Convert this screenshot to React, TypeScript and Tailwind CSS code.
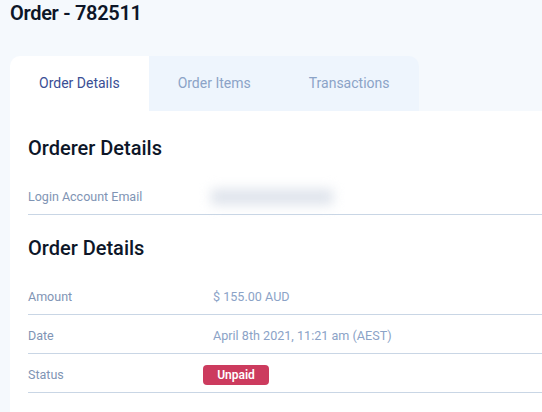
import React from 'react';

const rows = [
  { label: 'Amount', value: '$ 155.00 AUD' },
  { label: 'Date', value: 'April 8th 2021, 11:21 am (AEST)' },
];

export default function App() {
  return (
    <div
      className="w-[542px] h-[412px] overflow-hidden bg-[#f5f9fd] text-[#0d1628]"
      style={{ fontFamily: 'Roboto, "Noto Sans", sans-serif' }}
    >
      {/* Page title */}
      <h1 className="pl-[10px] text-[20px] font-semibold leading-[24px] pt-[1px] tracking-[-0.3px]">Order - 782511</h1>

      <div className="mt-[31px] ml-[10px] w-[620px]">
        {/* Tabs */}
        <div className="flex h-[55px]">
          <div className="bg-white rounded-tl-[10px] px-[29px] flex items-center text-[14px] text-[#3a4e94]">
            Order Details
          </div>
          <div className="bg-[#eef5fd] rounded-tr-[10px] flex">
            <div className="px-[29px] flex items-center text-[14px] text-[#8ba3c7]">Order Items</div>
            <div className="px-[29px] flex items-center text-[14px] text-[#8ba3c7]">Transactions</div>
          </div>
        </div>

        {/* Card */}
        <div className="bg-white pl-[18px] pt-[23px] pb-[40px]">
          <h2 className="text-[20px] font-medium leading-[28px] mb-[14px]">Orderer Details</h2>
          <div className="flex items-center h-[39px] border-b border-[#c9d6e5] pt-[4px] text-[12.5px]">
            <div className="w-[175px] text-[#8094b4]">Login Account Email</div>
            <div className="w-[122px] h-[16px] bg-[#dfe4ec] blur-[6px] ml-[8px]" />
          </div>

          <h2 className="text-[20px] font-medium leading-[28px] mt-[19px] mb-[14px]">Order Details</h2>
          {rows.map((r) => (
            <div key={r.label} className="flex items-center h-[39px] border-b border-[#c9d6e5] pt-[4px] text-[12.5px]">
              <div className="w-[175px] text-[#8094b4]">{r.label}</div>
              <div className="pl-[10px] text-[#8ba3c7] text-[12.6px]">{r.value}</div>
            </div>
          ))}
          <div className="flex items-center h-[39px] border-b border-[#c9d6e5] pt-[4px] text-[12.5px]">
            <div className="w-[175px] text-[#8094b4]">Status</div>
            <div className="w-[66px] h-[20px] rounded-[4px] bg-[#cc3b5e] text-white font-semibold text-[12px] flex items-center justify-center">
              Unpaid
            </div>
          </div>
        </div>
      </div>
    </div>
  );
}
